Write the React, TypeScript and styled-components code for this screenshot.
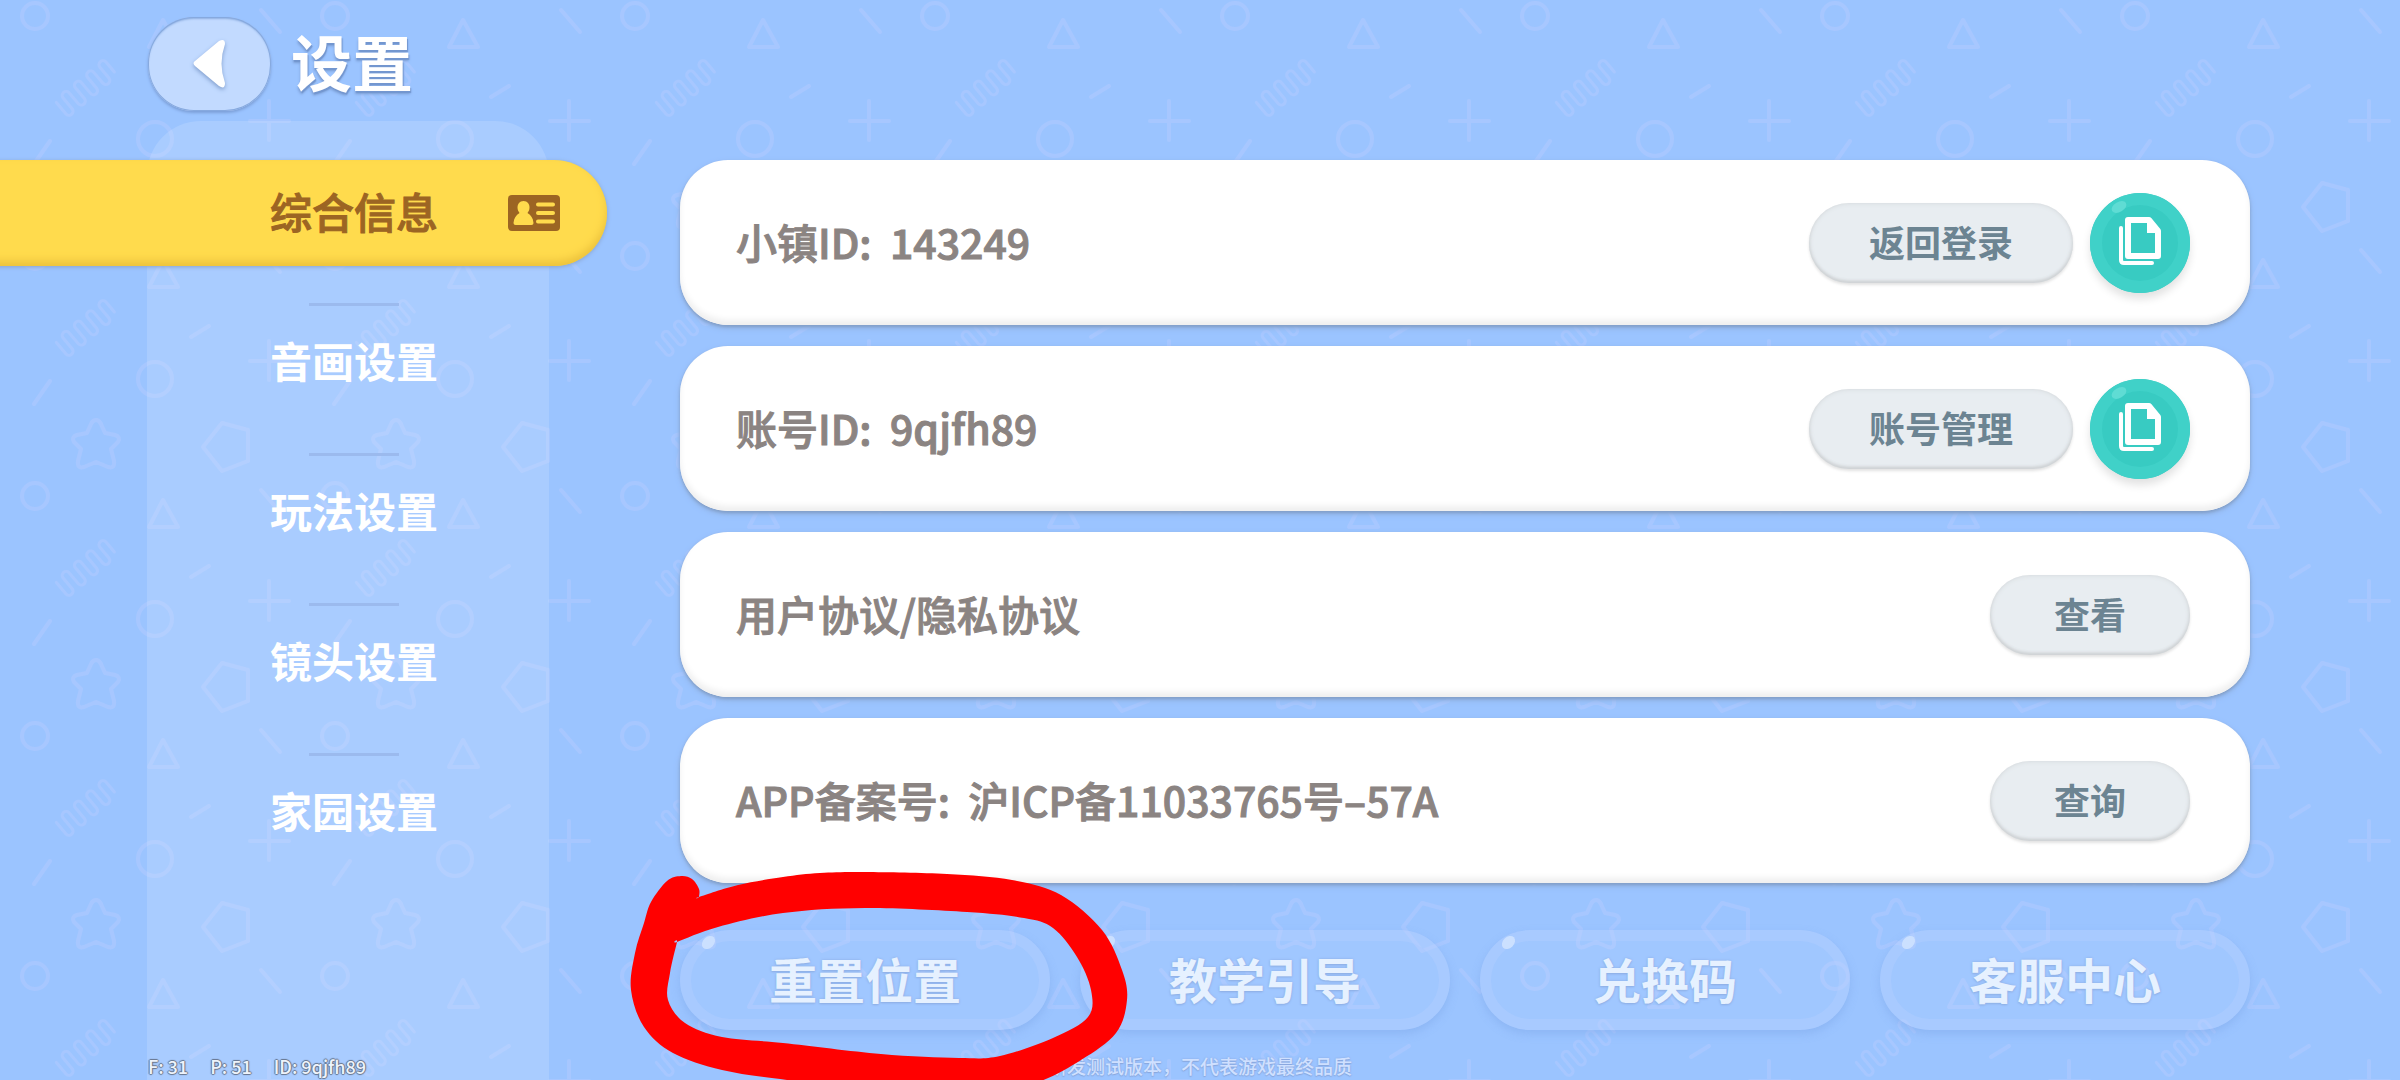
import React from "react";
import styled, { createGlobalStyle } from "styled-components";

/* ---------- background confetti tile (300 x 240) ---------- */

const tile = `<svg xmlns="http://www.w3.org/2000/svg" width="300" height="240" viewBox="0 0 300 240">
<g fill="none" stroke="#b4caff" stroke-opacity=".5" stroke-width="4" stroke-linecap="round" stroke-linejoin="round">
<circle cx="35" cy="16" r="13"/>
<path d="M261 10L280 32"/>
<path d="M163 20L149 47H178Z"/>
<g transform="translate(86 88) rotate(-40)" stroke-width="3"><path d="M-32 -8V7A4 4 0 0 0 -24 7V-7A4 4 0 0 1 -16 -7V7A4 4 0 0 0 -8 7V-7A4 4 0 0 1 0 -7V7A4 4 0 0 0 8 7V-7A4 4 0 0 1 16 -7V7A4 4 0 0 0 24 7V-7A4 4 0 0 1 32 -7V6"/></g>
<path d="M191 97L209 86"/>
<path d="M269 101V140M250 121H289"/>
<circle cx="155" cy="139" r="17"/>
<path d="M34 164L50 141"/>
<path d="M96 180Q99 180 101 184L105 193L115 195Q121 197 118 202L111 209L114 221Q115 229 108 227L96 222L84 227Q77 229 78 221L81 209L74 202Q71 197 77 195L87 193L91 184Q93 180 96 180Z"/>
<path d="M222 183L248 190V221L222 231L203 207Z"/>
</g></svg>`;

const tileUrl = `url("data:image/svg+xml,${encodeURIComponent(tile)}")`;

const Global = createGlobalStyle`
  *, *::before, *::after { box-sizing: border-box; }
  body { margin: 0; }
  button { font: inherit; color: inherit; border: 0; padding: 0; cursor: pointer; }
`;

/* ---------- page frame ---------- */

const Page = styled.div`
  position: relative;
  min-height: 100vh;
  overflow: hidden;
  display: flex;
  flex-direction: column;
  background-color: #9bc4ff;
  background-image: ${tileUrl};
  font-family: "Noto Sans CJK SC", "Noto Sans", sans-serif;
`;

const Header = styled.header`
  display: flex;
  align-items: center;
  gap: 20px;
  padding: 17px 148px 10px;
`;

const BackButton = styled.button`
  display: grid;
  place-items: center;
  width: 123px;
  height: 94px;
  border-radius: 46px;
  background: #c2daff;
  box-shadow: inset 0 0 0 1px #86a9df, inset 0 2px 2px #8fb0e2, 0 2px 3px #7c9fd8;

  svg {
    filter: drop-shadow(0 2px 2px #7f9dcc);
  }
`;

const Title = styled.h1`
  margin: 0;
  padding-bottom: 6px;
  font-size: 61px;
  line-height: 88px;
  font-weight: 700;
  color: #fff;
  text-shadow: 1px 2px 1px #7396cf, 0 3px 3px #7a9cd2;
`;

const Body = styled.div`
  flex: 1;
  display: flex;
`;

/* ---------- side navigation ---------- */

const Side = styled.nav`
  flex: none;
  width: 402px;
  margin-left: 147px;
  padding-top: 39px;
  border-radius: 54px 54px 0 0;
  background: rgba(255, 255, 255, 0.14);
`;

const NavList = styled.ul`
  list-style: none;
  margin: 0;
  padding: 0;
`;

const ActiveTab = styled.button`
  display: flex;
  align-items: center;
  justify-content: flex-end;
  gap: 70px;
  width: 627px;
  height: 106px;
  margin: 0 0 37px -167px;
  padding-right: 47px;
  border-radius: 0 53px 53px 0;
  background: #ffdb4d;
  box-shadow: inset 0 -5px 8px #ecc23c, 0 1px 4px #8aa4cc;
  color: #9c6523;
  font-size: 42px;
  line-height: 60px;
  font-weight: 500;
  -webkit-text-stroke: 1px #9c6523;
`;

const TabLabel = styled.span`
  padding-bottom: 4px;
`;

const NavItem = styled.li`
  display: flex;
  flex-direction: column;
  align-items: center;
  height: 150px;
  padding-left: 12px;

  &::before {
    content: "";
    width: 90px;
    height: 3px;
    background: #9bbaee;
  }
`;

const NavButton = styled.button`
  margin-top: 24px;
  background: none;
  color: #fff;
  font-size: 42px;
  line-height: 60px;
  font-weight: 700;
`;

/* ---------- main column ---------- */

const Main = styled.main`
  flex: 1;
  min-width: 0;
  padding: 39px 150px 49px 131px;
`;

const Cards = styled.div`
  display: flex;
  flex-direction: column;
  gap: 21px;
`;

const Card = styled.section`
  display: flex;
  align-items: center;
  gap: 17px;
  height: 165px;
  padding: 0 60px 0 56px;
  border-radius: 48px;
  background: #fff;
  box-shadow: inset 0 -5px 6px #efefef, 0 2px 3px #829fc9, 0 3px 6px #8fb0e0;
`;

const CardText = styled.p`
  flex: 1;
  margin: 0;
  padding-bottom: 4px;
  font-size: 41px;
  line-height: 60px;
  font-weight: 500;
  color: #8b8482;
  -webkit-text-stroke: 1px #8b8482;
  white-space: pre;
`;

const PillButton = styled.button<{ $wide?: boolean }>`
  width: ${(p) => (p.$wide ? 264 : 200)}px;
  height: 80px;
  padding-bottom: 3px;
  border-radius: 40px;
  background: #e8edf1;
  box-shadow: inset 0 0 5px #d3d7da, inset 0 -2px 3px #cbced0, 0 2px 3px #e2e2e2;
  color: #6c8492;
  font-size: 36px;
  line-height: 52px;
  font-weight: 700;
`;

const CopyButton = styled.button`
  position: relative;
  display: grid;
  place-items: center;
  width: 100px;
  height: 100px;
  padding-bottom: 4px;
  border-radius: 50%;
  background: #38cbc2;
  box-shadow: inset 0 0 0 12px #40d1c8, 0 6px 8px #e2e2e2;

  &::before {
    content: "";
    position: absolute;
    left: 21px;
    top: 9px;
    width: 16px;
    height: 10px;
    border-radius: 50%;
    background: #5fdcd4;
    transform: rotate(-30deg);
  }
`;

/* ---------- bottom actions ---------- */

const Actions = styled.div`
  display: grid;
  grid-template-columns: repeat(4, 1fr);
  gap: 30px;
  margin-top: 47px;
`;

const ActionCell = styled.div`
  position: relative;
  display: flex;
`;

const ActionButton = styled.button`
  position: relative;
  flex: 1;
  height: 100px;
  padding-bottom: 5px;
  border-radius: 50px;
  background: rgba(255, 255, 255, 0.06);
  box-shadow: inset 0 0 0 11px rgba(184, 209, 255, 0.36), 0 4px 8px rgba(116, 158, 224, 0.36);
  color: #e6f1ff;
  font-size: 48px;
  line-height: 70px;
  font-weight: 700;
  text-shadow: 0 0 3px #8fb0e6, 0 1px 2px #8fb0e6;

  &::before {
    content: "";
    position: absolute;
    left: 21px;
    top: 7px;
    width: 15px;
    height: 11px;
    border-radius: 50%;
    background: #cbe0ff;
    transform: rotate(-45deg);
  }
`;

const InkCircle = styled.svg`
  position: absolute;
  z-index: 2;
  left: -50px;
  top: -60px;
  width: 500px;
  height: 240px;
  pointer-events: none;
`;

/* ---------- overlay status line ---------- */

const Status = styled.footer`
  position: absolute;
  z-index: 1;
  left: 0;
  right: 0;
  bottom: 0;
  display: grid;
  grid-template-columns: 1fr auto 1fr;
  align-items: center;
  padding: 0 148px;
  line-height: 28px;
  pointer-events: none;
`;

const Debug = styled.div`
  display: flex;
  gap: 22px;
  font-size: 18px;
  font-weight: 500;
  color: #eef3fb;
  text-shadow: 1px 0 1px #66758c, -1px 0 1px #66758c, 0 1px 1px #66758c, 0 -1px 1px #66758c;
`;

const Notice = styled.div`
  font-size: 19px;
  font-weight: 500;
  color: #cfe0ff;
  text-shadow: 0 0 2px #86a3dc, 0 1px 1px #8ba9de;
`;

/* ---------- drawings ---------- */

const ArrowIcon = () => (
  <svg width="34" height="50" viewBox="0 0 34 50" aria-hidden="true">
    <path d="M2 22L26 2Q32 -1 32 5Q25 25 32 44Q32 51 26 47L2 27Q-1 24 2 22Z" fill="#fff" />
  </svg>
);

const CardIcon = () => (
  <svg width="52" height="36" viewBox="0 0 52 36" aria-hidden="true">
    <rect width="52" height="36" rx="4" fill="#9c6523" />
    <path
      d="M15.500 6C19.500 6 21.500 9 21.500 12.500C21.500 15 20.500 16.500 19.500 18C23 20 25 23 25.500 28Q25.500 30 23.500 30H7.500Q5.500 30 5.500 28C6 23 8 20 11.500 18C10.500 16.500 9.500 15 9.500 12.500C9.500 9 11.500 6 15.500 6Z"
      fill="#ffdb4d"
    />
    <path d="M30 9.500H45M30 18H45M30 26.500H45" stroke="#ffdb4d" strokeWidth="4" strokeLinecap="round" />
  </svg>
);

const CopyIcon = () => (
  <svg width="44" height="50" viewBox="0 0 44 50" aria-hidden="true">
    <path d="M3 12V44Q3 47 6 47H34" fill="none" stroke="#fff" strokeWidth="4" strokeLinecap="round" />
    <path d="M10 4H31L40 15V40H10Z" fill="none" stroke="#fff" strokeWidth="6" strokeLinejoin="round" />
    <path d="M30 4V16H41" fill="#fff" stroke="#fff" strokeWidth="2" />
  </svg>
);

type Point = [number, number];

/* Closed Catmull-Rom curve through the points, as cubic Béziers.
   A point listed twice makes a corner. */
function smooth(points: Point[]): string {
  const n = points.length;
  let d = `M${points[0].join(" ")}`;
  for (let i = 0; i < n; i++) {
    const a = points[(i - 1 + n) % n];
    const b = points[i];
    const c = points[(i + 1) % n];
    const e = points[(i + 2) % n];
    d += `C${b[0] + (c[0] - a[0]) / 6} ${b[1] + (c[1] - a[1]) / 6} ${c[0] - (e[0] - b[0]) / 6} ${
      c[1] - (e[1] - b[1]) / 6
    } ${c[0]} ${c[1]}`;
  }
  return d + "Z";
}

const inkOuter: Point[] = [
  [51, 6], [62, 9], [69, 19], [69, 27], [69, 27], [108, 15], [153, 7], [190, 3], [235, 2], [317, 4], [382, 10],
  [431, 25], [472, 60], [492, 100], [497, 130], [486, 163], [451, 190], [405, 213], [340, 225],
  [260, 223], [157, 210], [92, 200], [43, 183], [14, 157], [1, 120], [5, 83], [14, 53], [21, 32], [37, 11],
];

const inkInner: Point[] = [
  [47, 72], [47, 72], [88, 57], [153, 43], [235, 38], [337, 42], [394, 48], [423, 58], [447, 87], [461, 120],
  [458, 147], [423, 168], [370, 186], [329, 188], [251, 184], [153, 173], [92, 167], [55, 153],
  [38, 130], [40, 103],
];

const inkPath = smooth(inkOuter) + smooth(inkInner);

/* ---------- app ---------- */

const sections = ["音画设置", "玩法设置", "镜头设置", "家园设置"];

const rows = [
  { text: "小镇ID:  143249", action: "返回登录", copy: true },
  { text: "账号ID:  9qjfh89", action: "账号管理", copy: true },
  { text: "用户协议/隐私协议", action: "查看", copy: false },
  { text: "APP备案号:  沪ICP备11033765号–57A", action: "查询", copy: false },
];

const actions = [
  { name: "重置位置", circled: true },
  { name: "教学引导", circled: false },
  { name: "兑换码", circled: false },
  { name: "客服中心", circled: false },
];

export default function App() {
  return (
    <Page>
      <Global />
      <Header>
        <BackButton aria-label="返回">
          <ArrowIcon />
        </BackButton>
        <Title>设置</Title>
      </Header>
      <Body>
        <Side aria-label="设置">
          <ActiveTab aria-current="page">
            <TabLabel>综合信息</TabLabel>
            <CardIcon />
          </ActiveTab>
          <NavList>
            {sections.map((name) => (
              <NavItem key={name}>
                <NavButton>{name}</NavButton>
              </NavItem>
            ))}
          </NavList>
        </Side>
        <Main>
          <Cards>
            {rows.map((row) => (
              <Card key={row.text}>
                <CardText>{row.text}</CardText>
                <PillButton $wide={row.copy}>{row.action}</PillButton>
                {row.copy && (
                  <CopyButton aria-label="复制">
                    <CopyIcon />
                  </CopyButton>
                )}
              </Card>
            ))}
          </Cards>
          <Actions>
            {actions.map((action) => (
              <ActionCell key={action.name}>
                <ActionButton>{action.name}</ActionButton>
                {action.circled && (
                  <InkCircle viewBox="0 0 500 240" aria-hidden="true">
                    <path d={inkPath} fill="#f00" fillRule="evenodd" />
                  </InkCircle>
                )}
              </ActionCell>
            ))}
          </Actions>
        </Main>
      </Body>
      <Status>
        <Debug>
          <span>F: 31</span>
          <span>P: 51</span>
          <span>ID: 9qjfh89</span>
        </Debug>
        <Notice>研发测试版本，不代表游戏最终品质</Notice>
      </Status>
    </Page>
  );
}
